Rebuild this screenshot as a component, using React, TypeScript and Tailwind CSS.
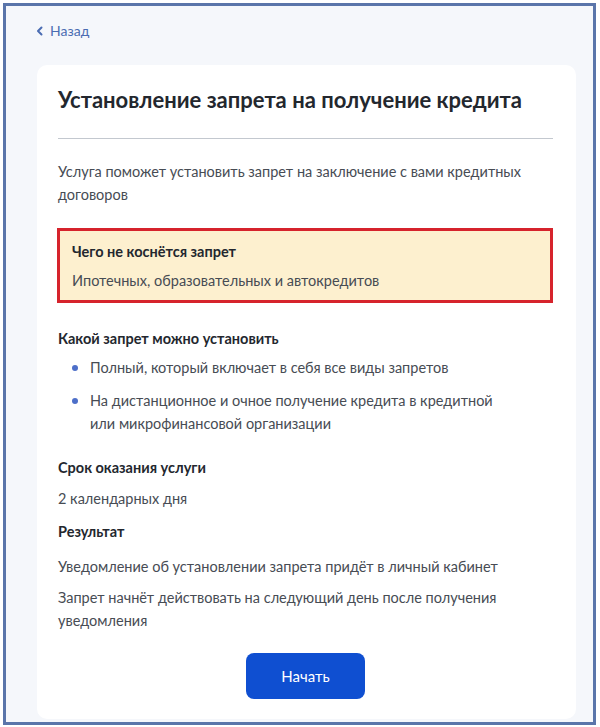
import React from 'react';

const body = 'text-[14.5px] leading-[23px] text-[#474c54]';
const heading = 'text-[14.5px] leading-[23px] font-bold text-[#23272e]';

const App: React.FC = () => {
  return (
    <div className="w-[600px] h-[727px] bg-white pt-[3px] pl-[3px] pr-[4px] pb-[2px] font-['Lato',sans-serif]">
      <div className="h-full border-[3px] border-[#5a75aa] bg-[#f5f7fb] overflow-hidden">
        <div className="pt-[15px] pl-[30px]">
          <a className="flex items-center gap-[7px] text-[14px] leading-[20px] text-[#4a6cb2]">
            <svg width="7" height="10" viewBox="0 0 7 10" fill="none">
              <path d="M5.5 1.5L2 5l3.5 3.5" stroke="currentColor" strokeWidth="2" strokeLinecap="round" strokeLinejoin="round" />
            </svg>
            Назад
          </a>
        </div>

        <div className="mt-[24px] ml-[31px] w-[539px] bg-white rounded-[10px] pt-[20px] pl-[21px] pr-[23px] pb-[20px]">
          <h1 className="text-[22px] leading-[30px] font-bold text-[#23272e] pb-[23px] border-b border-[#c3c8cf]">
            Установление запрета на получение кредита
          </h1>

          <p className={`${body} mt-[21px]`}>
            Услуга поможет установить запрет на заключение с вами кредитных договоров
          </p>

          <div className="mt-[22px] -ml-[1px] border-[3px] border-[#d6232c] bg-[#fdf0cf] px-[12px] pt-[9px] pb-[8px]">
            <div className={heading}>Чего не коснётся запрет</div>
            <div className={`${body} mt-[6px]`}>Ипотечных, образовательных и автокредитов</div>
          </div>

          <div className={`${heading} mt-[24px]`}>Какой запрет можно установить</div>
          <ul className="mt-[6px] flex flex-col gap-[10px]">
            <li className={`${body} flex gap-[12px] pl-[14px]`}>
              <span className="mt-[9px] w-[6px] h-[6px] rounded-full bg-[#4d6fc9] shrink-0" />
              <span>Полный, который включает в себя все виды запретов</span>
            </li>
            <li className={`${body} flex gap-[12px] pl-[14px]`}>
              <span className="mt-[9px] w-[6px] h-[6px] rounded-full bg-[#4d6fc9] shrink-0" />
              <span className="w-[420px]">На дистанционное и очное получение кредита в кредитной или микрофинансовой организации</span>
            </li>
          </ul>

          <div className={`${heading} mt-[21px]`}>Срок оказания услуги</div>
          <p className={`${body} mt-[8px]`}>2 календарных дня</p>

          <div className={`${heading} mt-[10px]`}>Результат</div>
          <p className={`${body} mt-[12px]`}>Уведомление об установлении запрета придёт в личный кабинет</p>
          <p className={`${body} mt-[8px] w-[460px]`}>
            Запрет начнёт действовать на следующий день после получения уведомления
          </p>

          <div className="mt-[21px] flex justify-center">
            <button className="w-[119px] h-[46px] rounded-[8px] bg-[#0f4fd1] text-white text-[15px] leading-[20px]">
              Начать
            </button>
          </div>
        </div>
      </div>
    </div>
  );
};

export default App;
